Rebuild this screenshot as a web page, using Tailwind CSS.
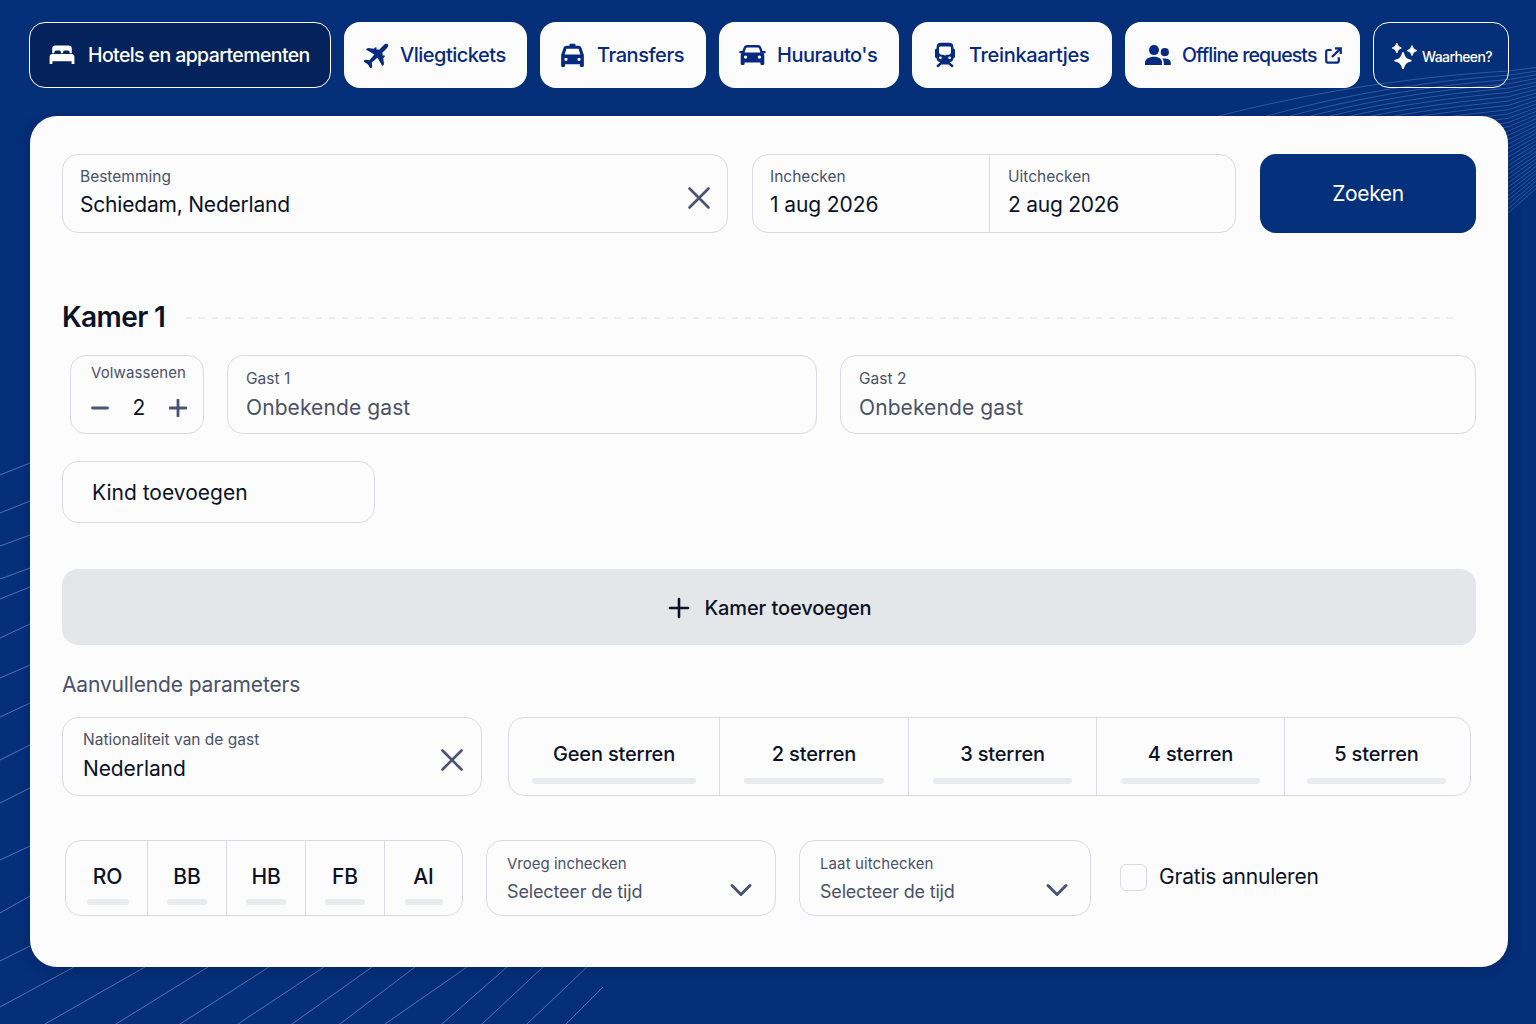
<!DOCTYPE html>
<html lang="nl">
  <head>
    <meta charset="UTF-8" />
    <meta name="viewport" content="width=device-width, initial-scale=1.0" />
    <title>Hotels en appartementen</title>
    <script src="https://cdn.jsdelivr.net/npm/@tailwindcss/browser@4"></script>
  </head>
  <body class="relative h-screen overflow-hidden bg-[#052f79] font-['Inter','Liberation_Sans',sans-serif] text-[#0b1226]">
    <!-- Decorative lines -->
    <svg class="absolute inset-0" width="1536" height="1024" fill="none" stroke-width="1">
      <g id="waves" stroke="#7fa3ea" stroke-opacity=".34"></g>
      <g id="stripes" stroke="#9db8ee" stroke-opacity=".5"></g>
    </svg>

    <div class="relative flex flex-col pl-[29px] pt-[22px]">
      <nav class="flex h-[66px] gap-[13px] whitespace-nowrap text-xl font-medium text-[#062a80]">
        <a class="flex w-[302px] items-center rounded-2xl border-[1.5px] border-white bg-[#04225b] pl-[19px] text-white">
          <svg class="mr-[13px] size-[26px]" viewBox="0 0 26 26" fill="currentColor">
            <path d="M3.2 11.2V6.6Q3.2 3.4 6.4 3.4H19.6Q22.8 3.4 22.8 6.6V11.2H20.6V10Q20.6 8.4 19 8.4H15.7Q14.1 8.4 14.1 10V11.2H11.9V10Q11.9 8.4 10.3 8.4H7Q5.4 8.4 5.4 10V11.2Z" />
            <path d="M3.6 12H22.4Q25.4 12 25.4 15V22H22.6V19.2H3.4V22H.6V15Q.6 12 3.6 12Z" />
          </svg>
          <span class="mt-0.5 text-[19.5px] tracking-[-0.6px]">Hotels en appartementen</span>
        </a>
        <a class="flex w-[183px] items-center rounded-2xl bg-[#fcfcfd] pl-5">
          <svg class="mr-[11px] size-[25px]" viewBox="0 0 24 24" fill="currentColor">
            <path transform="rotate(45 12 12)" d="M12 -3.2C13.4 -3.2 14.1 -1.6 14.1 0V6.2L16.6 8V7.4Q16.7 6.6 17.5 6.6T18.4 7.5V9.3L22.8 12.6Q23.4 13.2 23.2 15.2L14.1 12.8L13.6 20L16.8 22.6Q17.2 23.2 17 25L12 23.8L7 25Q6.8 23.2 7.2 22.6L10.4 20L9.9 12.8L.8 15.2Q.6 13.2 1.2 12.6L5.6 9.3V7.5Q5.7 6.6 6.5 6.6T7.4 7.4V8L9.9 6.2V0C9.9 -1.6 10.6 -3.2 12 -3.2Z" />
          </svg>
          <span class="tracking-[-0.5px]">Vliegtickets</span>
        </a>
        <a class="flex w-[166px] items-center rounded-2xl bg-[#fcfcfd] pl-[19px]">
          <svg class="mr-[11px] size-[27px]" viewBox="0 0 24 24" fill="currentColor">
            <path fill-rule="evenodd" d="M9.3 3.3V2.6Q9.3 1.6 10.3 1.6H13.7Q14.7 1.6 14.7 2.6V3.3H17.2C18.5 3.3 19.5 3.9 19.9 5.2L22.1 11.6V21Q22.1 22.2 20.9 22.2H19.8Q18.6 22.2 18.6 21V19.8H5.4V21Q5.4 22.2 4.2 22.2H3.1Q1.9 22.2 1.9 21V11.6L4.1 5.2C4.5 3.9 5.5 3.3 6.8 3.3ZM6.6 6L5 11.1H19L17.4 6ZM6.2 13.9A1.5 1.5 0 1 0 6.2 16.9A1.5 1.5 0 1 0 6.2 13.9ZM17.8 13.9A1.5 1.5 0 1 0 17.8 16.9A1.5 1.5 0 1 0 17.8 13.9Z" />
          </svg>
          <span class="tracking-[-0.45px]">Transfers</span>
        </a>
        <a class="flex w-[180px] items-center rounded-2xl bg-[#fcfcfd] pl-5">
          <svg class="mr-[11px] h-[22px] w-[27px]" viewBox="0 0 27 22" fill="currentColor">
            <path fill-rule="evenodd" d="M2.6 9.3H1.4Q.2 9.3 .2 8.1T1.4 6.9H3.5L4.4 4.3C5.1 2 6.1.9 8.4.9H18.6C20.9.9 21.9 2 22.6 4.3L23.5 6.9H25.6Q26.8 6.9 26.8 8.1T25.6 9.3H24.4Q25.3 10.2 25.3 11.6V19.8Q25.3 21.1 24 21.1H22.7Q21.4 21.1 21.4 19.8V18.4H5.6V19.8Q5.6 21.1 4.3 21.1H3Q1.7 21.1 1.7 19.8V11.6Q1.7 10.2 2.6 9.3ZM8.6 3.4Q7.1 3.4 6.7 4.8L5.6 8.5H21.4L20.3 4.8Q19.9 3.4 18.4 3.4ZM6.6 11.4A1.7 1.7 0 1 0 6.6 14.8A1.7 1.7 0 1 0 6.6 11.4ZM20.4 11.4A1.7 1.7 0 1 0 20.4 14.8A1.7 1.7 0 1 0 20.4 11.4Z" />
          </svg>
          <span class="tracking-[-0.5px]">Huurauto's</span>
        </a>
        <a class="flex w-[200px] items-center rounded-2xl bg-[#fcfcfd] pl-[22px]">
          <svg class="mr-[13px] h-[26px] w-[22px]" viewBox="0 0 22 26" fill="currentColor">
            <path fill-rule="evenodd" d="M7.2.8H14.8Q19.4.8 19.4 5.2V6.4Q21 6.6 21 8.2V14.4Q21 16 19.4 16.2Q19.2 19.6 15.6 20L19.4 23.4Q19.8 25.4 17.6 25.2L14.6 22.6H7.4L4.4 25.2Q2.2 25.4 2.6 23.4L6.4 20Q2.8 19.6 2.6 16.2Q1 16 1 14.4V8.2Q1 6.6 2.6 6.4V5.2Q2.6.8 7.2.8ZM5 5.8V9.4Q5 12.8 8.4 12.8H9.4Q11 14.4 12.6 12.8H13.6Q17 12.8 17 9.4V5.8Q17 4.4 15.6 4.4H6.4Q5 4.4 5 5.8ZM6.4 14.4A1.4 1.4 0 1 0 6.4 17.2A1.4 1.4 0 1 0 6.4 14.4ZM15.6 14.4A1.4 1.4 0 1 0 15.6 17.2A1.4 1.4 0 1 0 15.6 14.4Z" />
          </svg>
          <span class="tracking-[-0.33px]">Treinkaartjes</span>
        </a>
        <a class="flex w-[235px] items-center rounded-2xl bg-[#fcfcfd] pl-5">
          <svg class="mr-[11px] h-[20px] w-[26px]" viewBox="0 0 26 20" fill="currentColor">
            <circle cx="9" cy="5.1" r="5" />
            <path d="M0 20V17.6C0 14 4 11.7 9 11.7S17 14 17 17.6V20Z" />
            <circle cx="19.8" cy="7.2" r="4.1" />
            <path d="M18.8 20V17.4Q18.8 15 17.2 13.6Q20 13.1 22.4 13.8Q25.6 15 25.8 18V20Z" />
          </svg>
          <span class="mt-0.5 text-[19.5px] tracking-[-0.87px]">Offline requests</span>
          <svg class="ml-2 size-[17px]" viewBox="0 0 17 17" fill="none" stroke="currentColor" stroke-width="2.2">
            <path d="M6.6 3H3Q1.2 3 1.2 4.8V13.8Q1.2 15.6 3 15.6H12Q13.8 15.6 13.8 13.8V10.2M7 10L15.4 1.6M10 1.3H15.8V7.1" />
          </svg>
        </a>
        <a class="flex w-[136px] items-center rounded-2xl border-[1.5px] border-white pl-[17px] text-sm text-white">
          <svg class="mr-1 size-[27px]" viewBox="0 0 27 27" fill="currentColor">
            <path d="M12 10.8Q13.2 17.4 19.8 18.6Q13.2 19.8 12 26.6Q10.8 19.8 4.2 18.6Q10.8 17.4 12 10.8Z" stroke="currentColor" stroke-width="1.8" stroke-linejoin="round" />
            <path d="M5.8 1Q6.6 5.2 10.4 6Q6.6 6.8 5.8 11Q5 6.8 1.2 6Q5 5.2 5.8 1Z" stroke="currentColor" stroke-linejoin="round" />
            <path d="M21 3.6Q21.8 7.8 25.8 8.6Q21.8 9.4 21 13.6Q20.2 9.4 16.2 8.6Q20.2 7.8 21 3.6Z" stroke="currentColor" stroke-linejoin="round" />
          </svg>
          <span class="mt-[3px] tracking-[-0.6px]">Waarheen?</span>
        </a>
      </nav>

      <main class="ml-px mt-7 flex h-[851px] w-[1478px] flex-col rounded-[27px] bg-[#fcfcfd] pl-8 pt-[38px] shadow-[0_4px_14px_rgba(2,20,60,0.25)]">
        <!-- Search -->
        <div class="flex h-[79px]">
          <div class="flex w-[666px] justify-between rounded-2xl border border-[#d9dae3] pl-[17px] pr-4 pt-3">
            <div>
              <div class="text-[15.5px] leading-5 text-[#4a5168]">Bestemming</div>
              <div class="mt-1 text-[21px] leading-7 tracking-[-0.2px]">Schiedam, Nederland</div>
            </div>
            <svg class="mt-[19px] size-6" viewBox="0 0 24 24" fill="none" stroke="#4a5470" stroke-width="2.6" stroke-linecap="round"><path d="M2.5 2.5L21.5 21.5M21.5 2.5L2.5 21.5" /></svg>
          </div>
          <div class="ml-6 flex w-[484px] rounded-2xl border border-[#d9dae3]">
            <div class="w-[237px] border-r border-[#d9dae3] pl-[17px] pt-3">
              <div class="text-[15.5px] leading-5 text-[#4a5168]">Inchecken</div>
              <div class="mt-1 text-[21px] leading-7 tracking-[-0.1px]">1 aug 2026</div>
            </div>
            <div class="pl-[18px] pt-3">
              <div class="text-[15.5px] leading-5 text-[#4a5168]">Uitchecken</div>
              <div class="mt-1 text-[21px] leading-7 tracking-[-0.25px]">2 aug 2026</div>
            </div>
          </div>
          <button class="ml-6 w-[216px] rounded-2xl bg-[#05307b] text-[21px] tracking-[-0.4px] text-white">Zoeken</button>
        </div>

        <!-- Room -->
        <div class="mt-16 flex h-10 items-center">
          <h2 class="w-[124px] text-[28px] font-semibold tracking-[-0.6px]">Kamer 1</h2>
          <svg class="mt-0.5" width="1270" height="2"><path d="M0 1H1270" stroke="#e6e7ed" stroke-width="1.3" stroke-dasharray="6 7" /></svg>
        </div>
        <div class="mt-[18px] flex h-[79px]">
          <div class="ml-2 w-[134px] rounded-2xl border border-[#d9dae3] pt-[7px]">
            <div class="pl-[20px] text-[15px] leading-5 tracking-[0.1px] text-[#4a5168]">Volwassenen</div>
            <div class="mt-[11px] flex items-center pl-5 leading-7">
              <svg class="size-[18px]" viewBox="0 0 18 18" stroke="#4a5470" stroke-width="2.8" stroke-linecap="round"><path d="M1.5 9H16.5" /></svg>
              <span class="w-[60px] text-center text-[21px]">2</span>
              <svg class="size-[18px]" viewBox="0 0 18 18" stroke="#4a5470" stroke-width="2.8" stroke-linecap="round"><path d="M1 9H17M9 1V17" /></svg>
            </div>
          </div>
          <div class="ml-[23px] w-[590px] rounded-2xl border border-[#d9dae3] pl-[18px] pt-[13px]">
            <div class="text-[15.5px] leading-5 text-[#4a5168]">Gast 1</div>
            <div class="mt-[5px] text-[21px] leading-7 tracking-[0.1px] text-[#4a5168]">Onbekende gast</div>
          </div>
          <div class="ml-[23px] w-[636px] rounded-2xl border border-[#d9dae3] pl-[18px] pt-[13px]">
            <div class="text-[15.5px] leading-5 text-[#4a5168]">Gast 2</div>
            <div class="mt-[5px] text-[21px] leading-7 tracking-[0.1px] text-[#4a5168]">Onbekende gast</div>
          </div>
        </div>
        <button class="mt-[27px] h-[62px] w-[313px] rounded-2xl border border-[#d9dae3] pl-[29px] pt-0.5 text-left text-[21px]">Kind toevoegen</button>
        <button class="mt-[46px] flex h-[76px] w-[1414px] items-center justify-center gap-3.5 rounded-2xl bg-[#e5e6e9] pl-0.5 pt-0.5 text-xl font-medium">
          <svg class="size-[22px]" viewBox="0 0 22 22" stroke="currentColor" stroke-width="2.6" stroke-linecap="round"><path d="M2 11H20M11 2V20" /></svg>
          <span class="tracking-[-0.12px]">Kamer toevoegen</span>
        </button>

        <!-- Extra parameters -->
        <h3 class="mt-[26px] text-[21px] leading-7 tracking-[-0.15px] text-[#4a5168]">Aanvullende parameters</h3>
        <div class="mt-[18px] flex h-[79px]">
          <div class="flex w-[420px] justify-between rounded-2xl border border-[#d9dae3] pl-5 pr-[17px] pt-3">
            <div>
              <div class="text-[15.5px] leading-5 text-[#4a5168]">Nationaliteit van de gast</div>
              <div class="mt-[5px] text-[21px] leading-7 tracking-[-0.1px]">Nederland</div>
            </div>
            <svg class="mt-[18px] size-6" viewBox="0 0 24 24" fill="none" stroke="#4a5470" stroke-width="2.6" stroke-linecap="round"><path d="M2.5 2.5L21.5 21.5M21.5 2.5L2.5 21.5" /></svg>
          </div>
          <div class="ml-[26px] flex w-[963px] divide-x divide-[#d9dae3] rounded-2xl border border-[#d9dae3] text-xl font-medium tracking-[-0.16px]">
            <div class="flex w-[211px] flex-col items-center pt-[22px]">
              <span class="leading-7">Geen sterren</span>
              <span class="mt-[10px] h-1.5 w-[164px] rounded-full bg-[#eaebef]"></span>
            </div>
            <div class="flex w-[189px] flex-col items-center pt-[22px]">
              <span class="leading-7">2 sterren</span>
              <span class="mt-[10px] h-1.5 w-[140px] rounded-full bg-[#eaebef]"></span>
            </div>
            <div class="flex w-[188px] flex-col items-center pt-[22px]">
              <span class="leading-7">3 sterren</span>
              <span class="mt-[10px] h-1.5 w-[139px] rounded-full bg-[#eaebef]"></span>
            </div>
            <div class="flex w-[188px] flex-col items-center pt-[22px]">
              <span class="leading-7">4 sterren</span>
              <span class="mt-[10px] h-1.5 w-[139px] rounded-full bg-[#eaebef]"></span>
            </div>
            <div class="flex flex-1 flex-col items-center pr-0.5 pt-[22px]">
              <span class="leading-7">5 sterren</span>
              <span class="mt-[10px] h-1.5 w-[139px] rounded-full bg-[#eaebef]"></span>
            </div>
          </div>
        </div>

        <div class="ml-[3px] mt-[44px] flex h-[76px]">
          <div class="flex w-[398px] divide-x divide-[#d9dae3] rounded-2xl border border-[#d9dae3] text-[21px] font-medium tracking-[-0.1px]">
            <div class="flex w-[82px] flex-col items-center pl-0.5 pt-[22px]">
              <span class="leading-7">RO</span>
              <span class="mt-2 h-1.5 w-[42px] rounded-full bg-[#eaebef]"></span>
            </div>
            <div class="flex w-[79px] flex-col items-center pt-[22px]">
              <span class="leading-7">BB</span>
              <span class="mt-2 h-1.5 w-10 rounded-full bg-[#eaebef]"></span>
            </div>
            <div class="flex w-[79px] flex-col items-center pt-[22px]">
              <span class="leading-7">HB</span>
              <span class="mt-2 h-1.5 w-10 rounded-full bg-[#eaebef]"></span>
            </div>
            <div class="flex w-[79px] flex-col items-center pt-[22px]">
              <span class="leading-7">FB</span>
              <span class="mt-2 h-1.5 w-10 rounded-full bg-[#eaebef]"></span>
            </div>
            <div class="flex flex-1 flex-col items-center pt-[22px]">
              <span class="leading-7">AI</span>
              <span class="mt-2 h-1.5 w-[38px] rounded-full bg-[#eaebef]"></span>
            </div>
          </div>
          <div class="ml-[23px] flex w-[290px] justify-between rounded-2xl border border-[#d9dae3] pl-5 pr-[22px] pt-[13px]">
            <div>
              <div class="text-[15px] leading-5 text-[#4a5168]">Vroeg inchecken</div>
              <div class="mt-1.5 text-lg leading-6 tracking-[-0.15px] text-[#4a5168]">Selecteer de tijd</div>
            </div>
            <svg class="mt-[29px] h-3.5 w-6" viewBox="0 0 24 14" fill="none" stroke="#4a5470" stroke-width="3" stroke-linecap="round" stroke-linejoin="round"><path d="M3 2.5L12 11.5L21 2.5" /></svg>
          </div>
          <div class="ml-[23px] flex w-[292px] justify-between rounded-2xl border border-[#d9dae3] pl-5 pr-[21px] pt-[13px]">
            <div>
              <div class="text-[15px] leading-5 tracking-[0.1px] text-[#4a5168]">Laat uitchecken</div>
              <div class="mt-1.5 text-lg leading-6 tracking-[-0.2px] text-[#4a5168]">Selecteer de tijd</div>
            </div>
            <svg class="mt-[29px] h-3.5 w-6" viewBox="0 0 24 14" fill="none" stroke="#4a5470" stroke-width="3" stroke-linecap="round" stroke-linejoin="round"><path d="M3 2.5L12 11.5L21 2.5" /></svg>
          </div>
          <label class="ml-[29px] flex items-center gap-3 pb-0.5 text-[21px] tracking-[-0.2px]">
            <span class="size-[27px] rounded-md border border-[#d9dae3]"></span>
            <span>Gratis annuleren</span>
          </label>
        </div>
      </main>
    </div>

    <script>
      // Lines fanning out of the top right corner, steeper towards the bottom
      const waves = [];
      for (let i = 0; i < 34; i++) {
        const t = i / 33;
        const x = 1215 + 265 * Math.pow(t, 0.5);
        const y = 117 + 118 * Math.pow(t, 1.5);
        const end = 67 + 118 * t;
        const edge = end + 4 + 24 * t;
        waves.push(
          `<path d="M${x} ${y}C${x + (1508 - x) * 0.3} ${y - (y - edge) * 0.5} ${1508 - (1508 - x) * 0.35} ${edge + 6} 1508 ${edge}L1540 ${end}" />`
        );
      }
      document.getElementById("waves").innerHTML = waves.join("");

      // Stripes in the bottom left corner: x1, y1, x2, y2
      const stripes = [
        [0, 475, 30, 463], [0, 513, 30, 501], [0, 546, 30, 535], [0, 579, 30, 568],
        [0, 599, 30, 587], [0, 638, 30, 624], [0, 678, 30, 665], [0, 717, 30, 703],
        [0, 760, 30, 745], [0, 803, 30, 788], [0, 860, 30, 846], [0, 913, 30, 896],
        [0, 961, 30, 946], [0, 1007, 74, 967], [45, 1024, 145, 967], [116, 1024, 208, 967],
        [180, 1024, 269, 967], [238, 1024, 324, 967], [292, 1024, 372, 967], [340, 1024, 415, 967],
        [385, 1024, 467, 967], [442, 1024, 507, 967], [482, 1024, 543, 967], [527, 1024, 587, 967],
        [566, 1024, 603, 987],
      ];
      document.getElementById("stripes").innerHTML = stripes
        .map(([x1, y1, x2, y2]) => `<path d="M${x1} ${y1}L${x2} ${y2}" />`)
        .join("");
    </script>
  </body>
</html>
